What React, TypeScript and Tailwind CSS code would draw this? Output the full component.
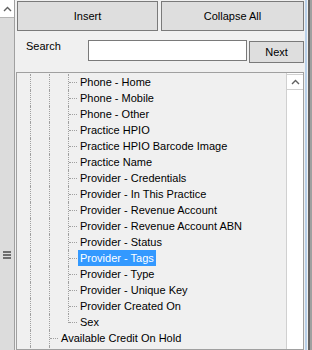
import React from 'react';

// Tree rows visible in the field picker
const fieldRows = [
  { label: 'Phone - Home', level: 3 },
  { label: 'Phone - Mobile', level: 3 },
  { label: 'Phone - Other', level: 3 },
  { label: 'Practice HPIO', level: 3 },
  { label: 'Practice HPIO Barcode Image', level: 3 },
  { label: 'Practice Name', level: 3 },
  { label: 'Provider - Credentials', level: 3 },
  { label: 'Provider - In This Practice', level: 3 },
  { label: 'Provider - Revenue Account', level: 3 },
  { label: 'Provider - Revenue Account ABN', level: 3 },
  { label: 'Provider - Status', level: 3 },
  { label: 'Provider - Tags', level: 3, selected: true },
  { label: 'Provider - Type', level: 3 },
  { label: 'Provider - Unique Key', level: 3 },
  { label: 'Provider Created On', level: 3 },
  { label: 'Sex', level: 3, last: true },
  { label: 'Available Credit On Hold', level: 2 },
  { label: 'Balance', level: 2 },
];

const Chevron = ({ className = '' }: { className?: string }) => (
  <svg width="9" height="6" viewBox="0 0 9 6" className={className}>
    <path d="M1 5 L4.5 1.5 L8 5" fill="none" stroke="#606060" strokeWidth="1.4" />
  </svg>
);

const TreeRow = ({ row }: { row: (typeof fieldRows)[number] }) => {
  return (
    <div className="flex h-[16px] items-stretch">
      <div className="w-[13px] shrink-0" />
      {/* full guide columns */}
      <div className="w-[19px] shrink-0 border-l border-dotted border-[#a0a0a0]" />
      {row.level === 3 && (
        <div className="w-[19px] shrink-0 border-l border-dotted border-[#a0a0a0]" />
      )}
      {/* connector */}
      <div className="relative w-[10px] shrink-0">
        <div
          className={`absolute left-0 top-0 border-l border-dotted border-[#a0a0a0] ${
            row.last ? 'h-[9px]' : 'h-full'
          }`}
        />
        <div className="absolute left-[1px] right-[1px] top-[8px] border-t border-dotted border-[#a0a0a0]" />
      </div>
      <div
        className={`flex items-center whitespace-nowrap px-[2px] leading-none ${
          row.selected ? 'bg-[#3399ff] text-white' : 'text-black'
        }`}
      >
        {row.label}
      </div>
    </div>
  );
};

export default function App() {
  return (
    <div
      className="flex h-[350px] w-[312px] overflow-hidden bg-[#f0f0f0] text-[11px] text-black"
      style={{ fontFamily: '"Liberation Sans", Arial, sans-serif' }}
    >
      {/* Collapsed side strip */}
      <div className="flex w-[14px] shrink-0 flex-col bg-[#dcdcdc]">
        <div className="flex h-[18px] items-center justify-center border-b border-[#b4b4b4] bg-white">
          <Chevron />
        </div>
        <div className="mt-[233px] flex flex-col gap-[1px] px-[3px]">
          <div className="h-[2px] bg-[#6e6e6e]" />
          <div className="h-[2px] bg-[#6e6e6e]" />
          <div className="h-[2px] bg-[#6e6e6e]" />
        </div>
      </div>
      <div className="w-[1px] shrink-0 bg-[#a0a0a0]" />
      <div className="w-[1px] shrink-0 bg-[#f0f0f0]" />

      {/* Main panel */}
      <div className="flex w-[288px] shrink-0 flex-col">
        <div className="mt-[1px] flex h-[30px] gap-[3px] pl-[1px]">
          <button className="flex-1 border border-[#7a7a7a] bg-[#dedede]">Insert</button>
          <button className="w-[143px] border border-[#7a7a7a] bg-[#dedede]">Collapse All</button>
        </div>

        <div className="flex h-[41px] items-start">
          <span className="ml-[10px] mt-[7px] w-[62px] shrink-0">Search</span>
          <input className="mt-[9px] h-[21px] w-[159px] border border-[#7a7a7a] bg-white outline-none" />
          <button className="ml-[2px] mt-[10px] h-[22px] w-[55px] border border-[#7a7a7a] bg-[#dedede]">
            Next
          </button>
        </div>

        {/* Field tree */}
        <div className="flex flex-1 overflow-hidden border border-[#a0a0a0]">
          <div className="flex-1 overflow-hidden pt-[1px]">
            {fieldRows.map((row) => (
              <TreeRow key={row.label} row={row} />
            ))}
          </div>
          <div className="flex w-[17px] shrink-0 flex-col border-l border-[#d0d0d0] bg-white">
            <div className="mt-[1px] flex h-[16px] items-center justify-center border-b border-t border-[#d0d0d0]">
              <Chevron />
            </div>
          </div>
        </div>
      </div>

      {/* Window edge */}
      <div className="w-[1px] shrink-0 bg-[#f0f0f0]" />
      <div className="w-[2px] shrink-0 bg-[#b9d1ea]" />
      <div className="w-[1px] shrink-0 bg-[#f0f0f0]" />
      <div className="w-[2px] shrink-0 bg-[#646464]" />
      <div className="flex-1 bg-[#a0a0a0]" />
    </div>
  );
}
